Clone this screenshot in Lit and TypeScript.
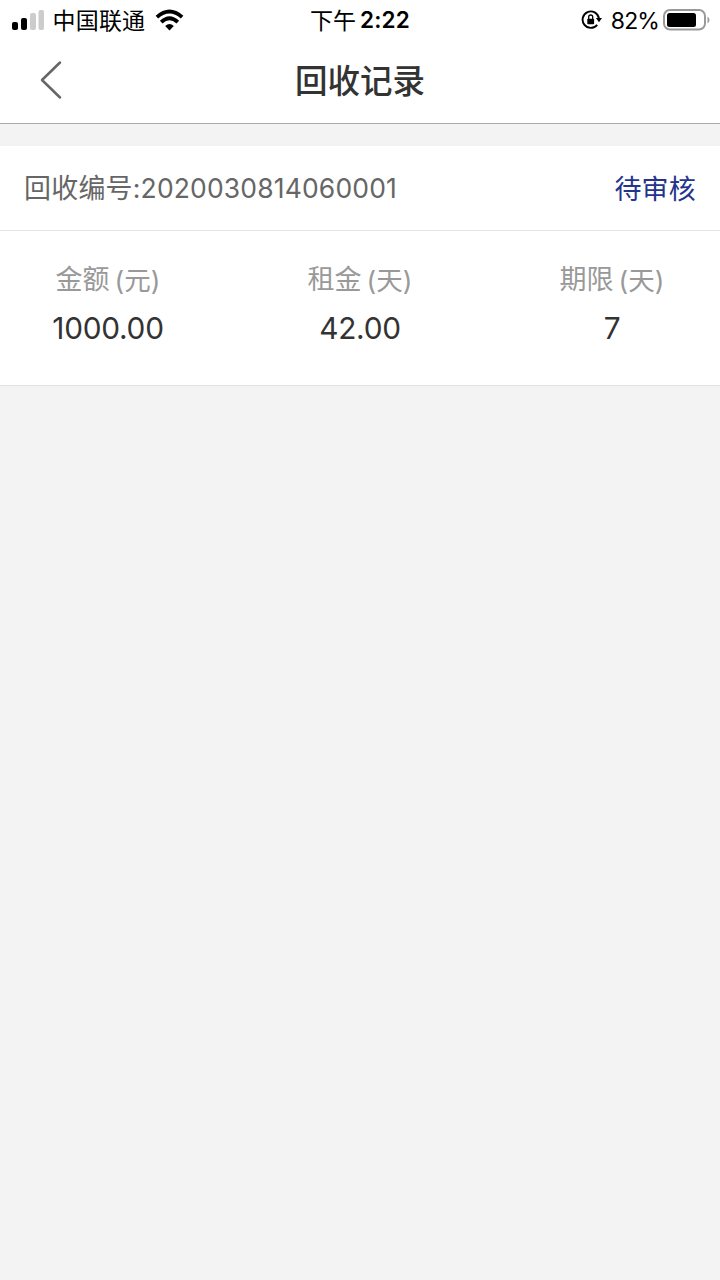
import { LitElement, html, css } from "lit";
import { customElement } from "lit/decorators.js";

@customElement("status-bar")
class StatusBar extends LitElement {
  static styles = css`
    :host { display: grid; grid-template-columns: 1fr auto 1fr; height: 40px; color: #000; font-size: 23px; line-height: 40px; }
    .left { display: flex; align-items: center; padding-left: 12px; }
    .signal, .wifi { margin-bottom: 2px; }
    .carrier { margin-left: 7.5px; letter-spacing: 0.2px; padding-top: 1px; }
    .wifi { margin-left: 9.5px; }
    .time { display: flex; justify-content: center; gap: 4px; }
    .time span:first-child { padding-top: 1px; }
    .clock { font-size: 22.5px; font-weight: 600; letter-spacing: 0.2px; }
    .right { display: flex; align-items: center; justify-content: flex-end; padding-right: 10px; }
    .lock { margin-bottom: 1px; }
    .pct { margin: 0 4px 0 9px; font-size: 23px; letter-spacing: -0.9px; }
    .battery { margin-bottom: 2px; }
    svg { display: block; flex: none; }
  `;
  render() {
    return html`
      <div class="left">
        <svg class="signal" width="33" height="22" viewBox="0 0 33 22">
          <rect x="0" y="13" width="6" height="8" rx="2" />
          <rect x="9" y="9" width="6" height="12" rx="2" />
          <rect x="18" y="4" width="6" height="17" rx="2" fill="#ccc" />
          <rect x="26.5" y="1" width="5.5" height="20" rx="2" fill="#ccc" />
        </svg>
        <span class="carrier">中国联通</span>
        <svg class="wifi" width="29" height="22" viewBox="0 0 29 22" fill="none" stroke="#000" stroke-width="3.8">
          <path d="M1.9 8.2Q14.5-3 27.1 8.2" />
          <path d="M6.2 13.2Q14.5 5.4 22.8 13.2" />
          <path d="M10.2 17Q14.5 13 18.8 17L14.5 21.4Z" fill="#000" stroke="none" />
        </svg>
      </div>
      <div class="time"><span>下午</span><span class="clock">2:22</span></div>
      <div class="right">
        <svg class="lock" width="21" height="20" viewBox="0 0 21 20" fill="none" stroke="#000">
          <path d="M16.2 14.8A8.2 8.2 0 1 1 17.9 8.2" stroke-width="1.9" />
          <path d="M14.9 8H21L18 12.2Z" fill="#000" stroke="none" />
          <rect x="6.3" y="8.7" width="6.8" height="5.5" rx=".8" fill="#000" stroke="none" />
          <path d="M7.7 9V7a2 2 0 0 1 4 0V9" stroke-width="1.3" />
        </svg>
        <span class="pct">82%</span>
        <svg class="battery" width="47" height="24" viewBox="0 0 47 24">
          <rect x="1" y="2" width="41" height="19.5" rx="6" fill="none" stroke="#999" stroke-width="2" />
          <rect x="4" y="5" width="29" height="14" rx="2.5" />
          <path d="M44.5 8.5Q46.5 9.5 46.5 12T44.5 15.5Z" fill="#999" />
        </svg>
      </div>
    `;
  }
}

@customElement("nav-header")
class NavHeader extends LitElement {
  static styles = css`
    :host { display: grid; grid-template-columns: 1fr auto 1fr; align-items: center; height: 83px; border-bottom: 1px solid #aaa; }
    .back { display: block; margin: 0 0 4px 39px; }
    .title { margin: 0; font-size: 32.5px; line-height: 48px; font-weight: 500; color: #333; }
  `;
  render() {
    return html`
      <svg class="back" width="24" height="40" viewBox="0 0 24 40" fill="none" stroke="#666" stroke-width="2.5" stroke-linecap="round" stroke-linejoin="round">
        <path d="M21 2.5L3 20L21 37.5" />
      </svg>
      <h1 class="title">回收记录</h1>
    `;
  }
}

@customElement("record-card")
class RecordCard extends LitElement {
  static styles = css`
    :host { display: block; margin-top: 22px; background: #fff; border-bottom: 1px solid #e3e3e3; }
    .head { display: flex; justify-content: space-between; align-items: center; height: 84px; padding: 0 24px; border-bottom: 1px solid #e3e3e3; font-size: 27px; line-height: 40px; }
    .order { color: #666; letter-spacing: 0.2px; }
    .digits { font-size: 26.5px; letter-spacing: 0.15px; }
    .status { color: #24348c; margin-top: 3px; letter-spacing: 0.2px; }
    .body { display: grid; grid-template-columns: 216px 1fr 216px; height: 125px; padding-top: 29px; text-align: center; }
    .label { display: flex; justify-content: center; gap: 5px; font-size: 27px; line-height: 40px; color: #999; }
    .unit { font-size: 26.5px; }
    .value { font-size: 29.8px; line-height: 40px; margin-top: 8px; color: #333; letter-spacing: -0.25px; }
  `;
  render() {
    const items = [["金额", "(元)", "1000.00"], ["租金", "(天)", "42.00"], ["期限", "(天)", "7"]];
    return html`
      <div class="head">
        <div class="order">回收编号<span class="digits">:2020030814060001</span></div>
        <div class="status">待审核</div>
      </div>
      <div class="body">
        ${items.map(([name, unit, value]) => html`
          <div>
            <div class="label"><span>${name}</span><span class="unit">${unit}</span></div>
            <div class="value">${value}</div>
          </div>`)}
      </div>
    `;
  }
}

@customElement("app-root")
class AppRoot extends LitElement {
  static styles = css`
    :host { display: block; min-height: 1280px; background: #f3f3f3; font-family: Inter, "Noto Sans CJK SC", sans-serif; }
    .top { background: #fff; }
  `;
  render() {
    return html`
      <div class="top"><status-bar></status-bar><nav-header></nav-header></div>
      <record-card></record-card>
    `;
  }
}
